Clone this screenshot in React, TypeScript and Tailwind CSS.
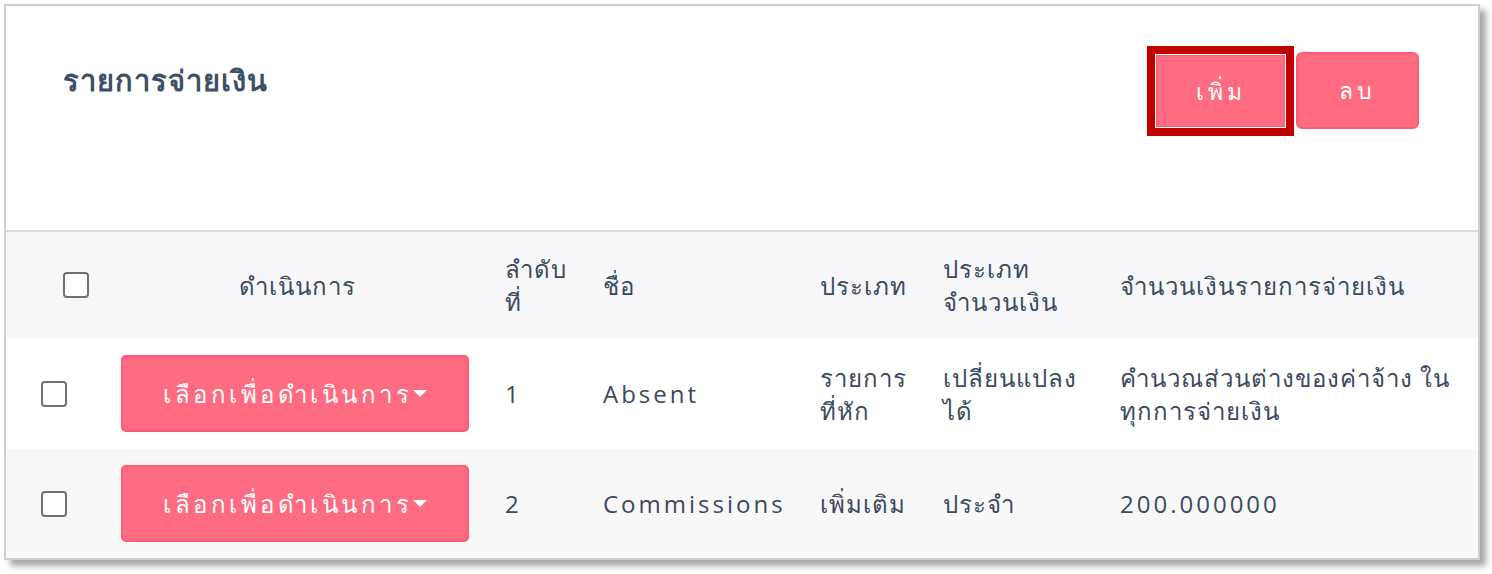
import React from 'react';

type Row = {
  no: number;
  name: string;
  type: string[];
  amountType: string[];
  amount: string[];
  amountLatin?: boolean;
};

const rows: Row[] = [
  {
    no: 1,
    name: 'Absent',
    type: ['รายการ', 'ที่หัก'],
    amountType: ['เปลี่ยนแปลง', 'ได้'],
    amount: ['คำนวณส่วนต่างของค่าจ้าง ใน', 'ทุกการจ่ายเงิน'],
  },
  {
    no: 2,
    name: 'Commissions',
    type: ['เพิ่มเติม'],
    amountType: ['ประจำ'],
    amount: ['200.000000'],
    amountLatin: true,
  },
];

const Lines = ({ lines }: { lines: string[] }) => (
  <>
    {lines.map((l, i) => (
      <span key={i} className="block whitespace-nowrap">
        {l}
      </span>
    ))}
  </>
);

const Checkbox = () => (
  <span className="block w-[26px] h-[26px] rounded-[4px] border-2 border-[#707070] bg-white" />
);

const ActionButton = () => (
  <button className="w-[348px] h-[77px] rounded-[5px] border-2 border-[#ff5a73] bg-[#ff6b81] text-white text-[24px] tracking-[3.5px] flex items-center justify-center">
    เลือกเพื่อดำเนินการ
    <span className="ml-[1px] inline-block w-0 h-0 border-l-[7px] border-r-[7px] border-t-[7px] border-l-transparent border-r-transparent border-t-white" />
  </button>
);

export default function App() {
  return (
    <div
      className="w-[1492px] h-[574px] bg-white pt-[4px] pl-[4px]"
      style={{ fontFamily: '"Open Sans", "Noto Sans", sans-serif' }}
    >
      <div className="w-[1476px] h-[556px] border-2 border-[#cfcfcf] bg-white shadow-[6px_6px_6px_rgba(0,0,0,0.35)] flex flex-col overflow-hidden text-[#3b4a5e]">
        <div className="h-[226px] flex items-start justify-between border-b-2 border-[#dcdcdc]">
          <h1 className="pl-[57px] pt-[52px] text-[29px] font-semibold text-[#3d4f66] tracking-[1px]">
            รายการจ่ายเงิน
          </h1>
          <div className="flex items-start pt-[40px] pr-[59px]">
            <div className="border-[8px] border-[#c00000] p-[1px]">
              <button className="w-[129px] h-[72px] bg-[#ff6b81] border border-[#ff5a73] text-white text-[23px] font-medium tracking-[4px]">
                เพิ่ม
              </button>
            </div>
            <button className="ml-[2px] mt-[6px] w-[123px] h-[77px] rounded-[6px] bg-[#ff6b81] border-2 border-[#ff5a73] text-white text-[23px] font-medium tracking-[4px]">
              ลบ
            </button>
          </div>
        </div>

        <table className="w-full table-fixed border-collapse text-[24px] tracking-[1px]">
          <colgroup>
            <col className="w-[100px]" />
            <col className="w-[382px]" />
            <col className="w-[98px]" />
            <col className="w-[217px]" />
            <col className="w-[123px]" />
            <col className="w-[177px]" />
            <col />
          </colgroup>
          <thead>
            <tr className="h-[106px] bg-[#f7f7f9] leading-[33px]">
              <th className="pl-[57px] text-left">
                <Checkbox />
              </th>
              <th className="text-center font-medium">ดำเนินการ</th>
              <th className="pl-[17px] text-left font-medium">
                <Lines lines={['ลำดับ', 'ที่']} />
              </th>
              <th className="pl-[17px] text-left font-medium">ชื่อ</th>
              <th className="pl-[17px] text-left font-medium">ประเภท</th>
              <th className="pl-[17px] text-left font-medium">
                <Lines lines={['ประเภท', 'จำนวนเงิน']} />
              </th>
              <th className="pl-[17px] text-left font-medium">จำนวนเงินรายการจ่ายเงิน</th>
            </tr>
          </thead>
          <tbody>
            {rows.map((r, i) => (
              <tr
                key={r.no}
                className={`${i % 2 === 0 ? 'bg-white h-[111px]' : 'bg-[#f8f8f9] h-[109px]'} leading-[33px]`}
              >
                <td className="pl-[35px]">
                  <Checkbox />
                </td>
                <td className="pl-[15px]">
                  <ActionButton />
                </td>
                <td className="pl-[17px] tracking-[3px]">{r.no}</td>
                <td className="pl-[17px] tracking-[3px]">{r.name}</td>
                <td className="pl-[17px]">
                  <Lines lines={r.type} />
                </td>
                <td className="pl-[17px]">
                  <Lines lines={r.amountType} />
                </td>
                <td className={r.amountLatin ? 'pl-[17px] tracking-[3px]' : 'pl-[17px]'}>
                  <Lines lines={r.amount} />
                </td>
              </tr>
            ))}
          </tbody>
        </table>
      </div>
    </div>
  );
}
